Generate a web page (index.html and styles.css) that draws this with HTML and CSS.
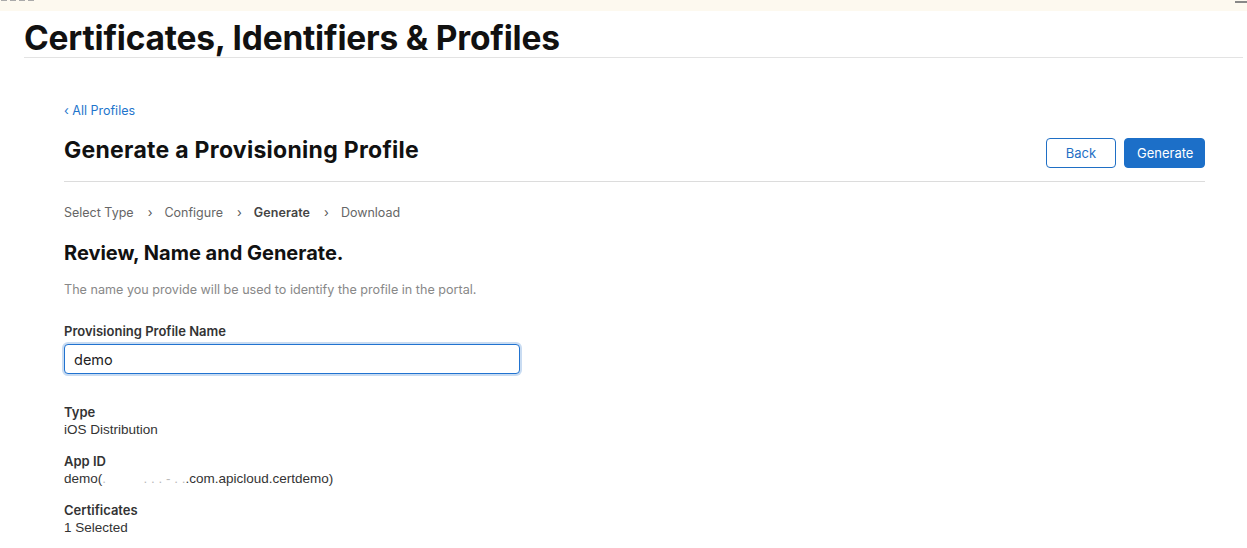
FILE: index.html
```html
<!DOCTYPE html>
<html lang="en">
<head>
<meta charset="utf-8">
<title>Certificates, Identifiers &amp; Profiles</title>
<link rel="stylesheet" href="styles.css">
</head>
<body>
<div class="topbar"><span class="topbar-marks"><i></i><i></i><i></i><i></i></span><span class="topbar-mark"></span></div>
<header class="site-header">
  <h1 class="site-title">Certificates, Identifiers &amp; Profiles</h1>
</header>
<main class="content">
  <a class="back-link" href="#">‹ All Profiles</a>
  <div class="page-head">
    <h2 class="page-title">Generate a Provisioning Profile</h2>
    <div class="actions">
      <button class="btn btn-outline">Back</button>
      <button class="btn btn-primary">Generate</button>
    </div>
  </div>
  <nav class="steps">
    <span class="step">Select Type</span>
    <span class="sep">›</span>
    <span class="step">Configure</span>
    <span class="sep">›</span>
    <span class="step current">Generate</span>
    <span class="sep">›</span>
    <span class="step">Download</span>
  </nav>
  <h3 class="section-title">Review, Name and Generate.</h3>
  <p class="desc">The name you provide will be used to identify the profile in the portal.</p>
  <label class="field-label" for="pname">Provisioning Profile Name</label>
  <input class="field-input" id="pname" type="text" value="demo">
  <dl class="details">
    <div class="detail">
      <dt>Type</dt>
      <dd>iOS Distribution</dd>
    </div>
    <div class="detail">
      <dt>App ID</dt>
      <dd>demo(<span class="blur">.&nbsp;&nbsp;&nbsp;&nbsp;&nbsp;&nbsp;&nbsp;&nbsp;&nbsp;&nbsp;. . . - . .</span>.com.apicloud.certdemo)</dd>
    </div>
    <div class="detail">
      <dt>Certificates</dt>
      <dd>1 Selected</dd>
    </div>
  </dl>
</main>
</body>
</html>
```

FILE: styles.css
```css
* { box-sizing: border-box; }
html, body { margin: 0; padding: 0; background: #fff; }
body {
  font-family: Inter, "Helvetica Neue", "Liberation Sans", Arial, sans-serif;
  color: #1d1d1f;
  width: 1247px;
  overflow: hidden;
}
.topbar {
  height: 11px;
  background: #fdf9ef;
  display: flex;
  justify-content: space-between;
  align-items: flex-start;
}
.topbar-marks {
  display: flex;
  gap: 3px;
  padding-left: 1px;
}
.topbar-marks i {
  display: block;
  width: 6px;
  height: 1px;
  background: #aaa;
}
.topbar-mark {
  width: 12px;
  height: 2px;
  background: #888;
  margin-top: 1px;
}
.site-header {
  margin: 0 4px 0 24px;
  border-bottom: 1px solid #e3e3e3;
  height: 47px;
}
.site-title {
  margin: 0;
  font-size: 33.5px;
  font-weight: 700;
  letter-spacing: -0.2px;
  line-height: 32px;
  padding-top: 11px;
  color: #111;
}
.content {
  padding: 0 42px 0 64px;
}
.back-link {
  display: block;
  margin-top: 45px;
  font-size: 12.5px;
  line-height: 16px;
  color: #1f75cc;
  text-decoration: none;
}
.page-head {
  display: flex;
  justify-content: space-between;
  align-items: flex-end;
  border-bottom: 1px solid #dcdcdc;
  padding-bottom: 13px;
  margin-top: 17px;
}
.page-title {
  margin: 0 0 4px 0;
  font-size: 23px;
  line-height: 28px;
  font-weight: 700;
  letter-spacing: 0.28px;
  color: #111;
}
.actions {
  display: flex;
  gap: 8px;
}
.btn {
  font-family: inherit;
  font-size: 13px;
  height: 30px;
  border-radius: 4px;
  padding: 0 12px;
  cursor: pointer;
}
.btn-outline {
  width: 70px;
  background: #fff;
  border: 1px solid #1f6fc5;
  color: #1f6fc5;
}
.btn-primary {
  width: 81px;
  background: #1c6fc8;
  border: 1px solid #1c6fc8;
  color: #fff;
}
.steps {
  display: flex;
  margin-top: 23px;
  font-size: 12.5px;
  line-height: 16px;
  color: #666;
}
.sep {
  margin: 0 12px 0 14px;
  color: #555;
}
.step.current {
  font-weight: 600;
  color: #444;
  letter-spacing: 0.1px;
}
.section-title {
  margin: 20px 0 0 0;
  font-size: 20px;
  line-height: 24px;
  font-weight: 700;
  color: #111;
}
.desc {
  margin: 17px 0 0 0;
  font-size: 12.6px;
  line-height: 16px;
  color: #888;
}
.field-label {
  display: block;
  margin-top: 25px;
  font-size: 13px;
  line-height: 16px;
  font-weight: 600;
  color: #333;
}
.field-input {
  display: block;
  margin-top: 5px;
  width: 456px;
  height: 30px;
  padding: 0 9px;
  font-family: inherit;
  font-size: 14.5px;
  color: #222;
  border: 1px solid #2173d0;
  border-radius: 4px;
  box-shadow: 0 0 0 2px #c9dcf2;
  outline: none;
}
.details {
  margin: 29px 0 0 0;
}
.detail {
  margin-bottom: 13px;
}
.details dt {
  font-size: 13px;
  line-height: 18px;
  font-weight: 600;
  color: #333;
}
.details dd {
  margin: 0;
  font-size: 13.5px;
  line-height: 18px;
  color: #333;
  font-family: "Helvetica Neue", "Liberation Sans", Arial, sans-serif;
}
.blur {
  color: #bbb;
}
```
